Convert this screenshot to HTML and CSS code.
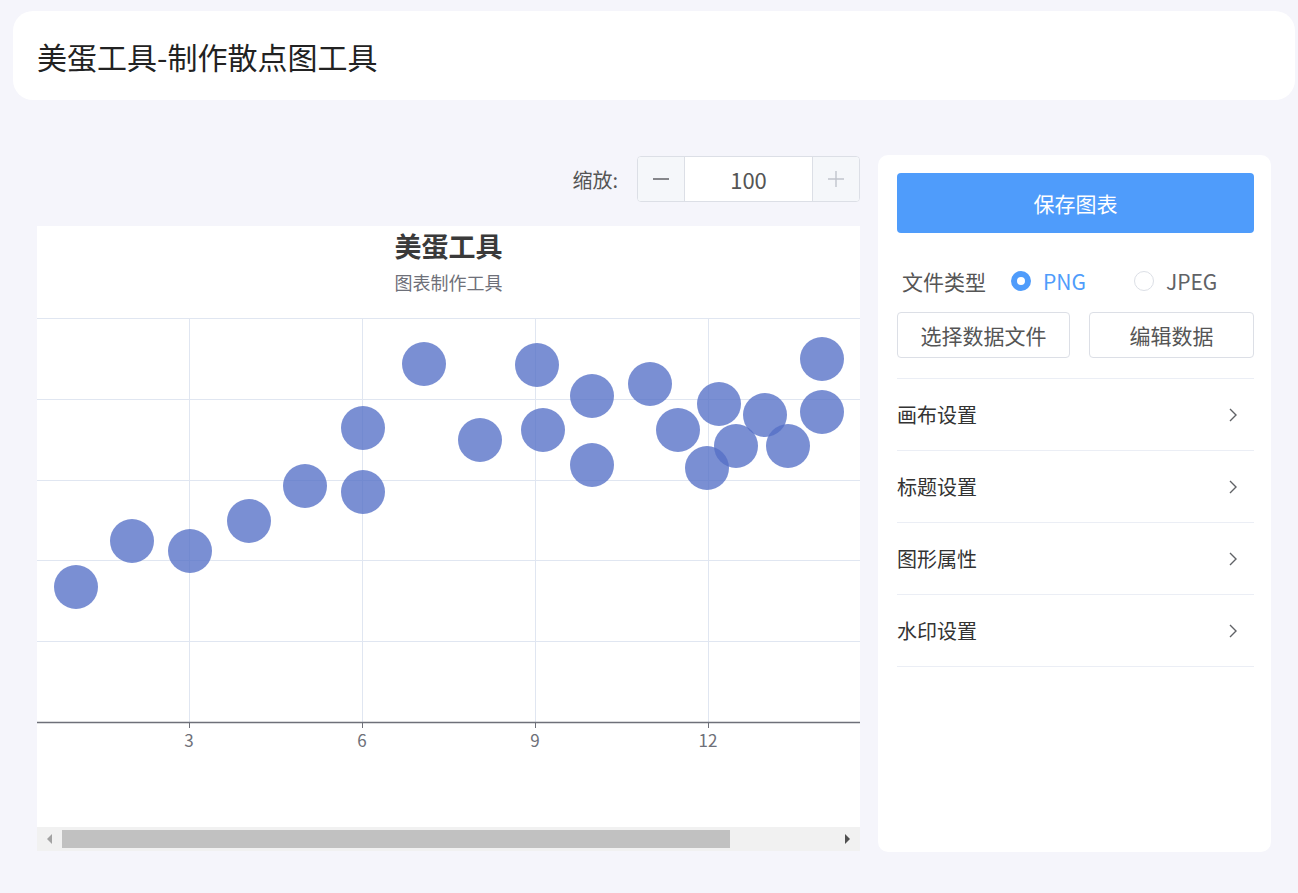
FILE: index.html
```html
<!DOCTYPE html>
<html lang="zh-CN">
<head>
<meta charset="utf-8">
<title>美蛋工具-制作散点图工具</title>
<link rel="stylesheet" href="styles.css">
</head>
<body>
<header class="header">
  <h1 class="page-title">美蛋工具-制作散点图工具</h1>
</header>
<main class="main">
  <section class="workspace">
    <div class="toolbar">
      <span class="zoom-label">缩放:</span>
      <div class="stepper">
        <button class="step-btn minus" type="button">
          <svg width="18" height="18" viewBox="0 0 18 18"><line x1="1" y1="9" x2="17" y2="9" stroke="#606266" stroke-width="1.6"/></svg>
        </button>
        <div class="step-value">100</div>
        <button class="step-btn plus" type="button">
          <svg width="18" height="18" viewBox="0 0 18 18"><line x1="1" y1="9" x2="17" y2="9" stroke="#c0c4cc" stroke-width="1.4"/><line x1="9" y1="1" x2="9" y2="17" stroke="#c0c4cc" stroke-width="1.4"/></svg>
        </button>
      </div>
    </div>
    <div class="chart-card">
      <div class="chart-head">
        <div class="c-title">美蛋工具</div>
        <div class="c-sub">图表制作工具</div>
      </div>
      <svg class="chart" width="823" height="509" viewBox="0 92 823 509">
        <g stroke="#e0e6f1" stroke-width="1">
          <line x1="0" y1="92.5" x2="823" y2="92.5"/>
          <line x1="0" y1="173.5" x2="823" y2="173.5"/>
          <line x1="0" y1="254.5" x2="823" y2="254.5"/>
          <line x1="0" y1="334.5" x2="823" y2="334.5"/>
          <line x1="0" y1="415.5" x2="823" y2="415.5"/>
          <line x1="152.5" y1="92" x2="152.5" y2="496"/>
          <line x1="325.5" y1="92" x2="325.5" y2="496"/>
          <line x1="498.5" y1="92" x2="498.5" y2="496"/>
          <line x1="671.5" y1="92" x2="671.5" y2="496"/>
        </g>
        <line x1="0" y1="496.5" x2="823" y2="496.5" stroke="#6e7079" stroke-width="1.3"/>
        <g stroke="#6e7079" stroke-width="1">
          <line x1="152.5" y1="496" x2="152.5" y2="502"/>
          <line x1="325.5" y1="496" x2="325.5" y2="502"/>
          <line x1="498.5" y1="496" x2="498.5" y2="502"/>
          <line x1="671.5" y1="496" x2="671.5" y2="502"/>
        </g>
        <g class="c-axis" text-anchor="middle">
          <text x="152" y="521">3</text>
          <text x="325" y="521">6</text>
          <text x="498" y="521">9</text>
          <text x="671" y="521">12</text>
        </g>
        <g fill="#5470c6" fill-opacity="0.78">
          <circle cx="39" cy="361" r="22"/>
          <circle cx="95" cy="315" r="22"/>
          <circle cx="153" cy="325" r="22"/>
          <circle cx="212" cy="295" r="22"/>
          <circle cx="268" cy="260" r="22"/>
          <circle cx="326" cy="202" r="22"/>
          <circle cx="326" cy="266" r="22"/>
          <circle cx="387" cy="138" r="22"/>
          <circle cx="443" cy="214" r="22"/>
          <circle cx="500" cy="139" r="22"/>
          <circle cx="506" cy="204" r="22"/>
          <circle cx="555" cy="170" r="22"/>
          <circle cx="555" cy="239" r="22"/>
          <circle cx="613" cy="158" r="22"/>
          <circle cx="641" cy="204" r="22"/>
          <circle cx="682" cy="178" r="22"/>
          <circle cx="670" cy="242" r="22"/>
          <circle cx="699" cy="220" r="22"/>
          <circle cx="728" cy="189" r="22"/>
          <circle cx="751" cy="220" r="22"/>
          <circle cx="785" cy="133" r="22"/>
          <circle cx="785" cy="186" r="22"/>
        </g>
      </svg>
    </div>
    <div class="scrollbar">
      <span class="sb-btn"><span class="tri-left"></span></span>
      <span class="sb-thumb"></span>
      <span class="sb-space"></span>
      <span class="sb-btn"><span class="tri-right"></span></span>
    </div>
  </section>
  <aside class="panel">
    <button class="save-btn" type="button">保存图表</button>
    <div class="type-row">
      <span class="type-label">文件类型</span>
      <label class="radio checked"><span class="radio-dot"></span><span class="radio-text">PNG</span></label>
      <label class="radio"><span class="radio-dot"></span><span class="radio-text">JPEG</span></label>
    </div>
    <div class="btn-row">
      <button class="plain-btn" type="button">选择数据文件</button>
      <button class="plain-btn" type="button">编辑数据</button>
    </div>
    <ul class="menu">
      <li class="menu-item"><span>画布设置</span><svg width="10" height="16" viewBox="0 0 10 16"><polyline points="2,2 8,8 2,14" fill="none" stroke="#606266" stroke-width="1.4"/></svg></li>
      <li class="menu-item"><span>标题设置</span><svg width="10" height="16" viewBox="0 0 10 16"><polyline points="2,2 8,8 2,14" fill="none" stroke="#606266" stroke-width="1.4"/></svg></li>
      <li class="menu-item"><span>图形属性</span><svg width="10" height="16" viewBox="0 0 10 16"><polyline points="2,2 8,8 2,14" fill="none" stroke="#606266" stroke-width="1.4"/></svg></li>
      <li class="menu-item"><span>水印设置</span><svg width="10" height="16" viewBox="0 0 10 16"><polyline points="2,2 8,8 2,14" fill="none" stroke="#606266" stroke-width="1.4"/></svg></li>
    </ul>
  </aside>
</main>
</body>
</html>
```

FILE: styles.css
```css
* { box-sizing: border-box; }
html, body { margin: 0; padding: 0; }
body {
  background: #f5f5fb;
  font-family: "Noto Sans CJK SC", "Noto Sans", sans-serif;
  color: #333;
  width: 1298px;
  height: 893px;
  overflow: hidden;
}
button { font-family: inherit; }

.header {
  margin: 11px 3px 0 13px;
  height: 89px;
  background: #fff;
  border-radius: 20px;
  display: flex;
  align-items: center;
  padding-left: 24px;
}
.page-title {
  margin: 0;
  font-size: 30px;
  font-weight: 400;
  color: #222;
  line-height: 1;
}

.main {
  display: flex;
  align-items: flex-start;
  margin: 55px 0 0 37px;
}
.workspace {
  width: 823px;
  display: flex;
  flex-direction: column;
}
.toolbar {
  margin-top: 1px;
  height: 46px;
  display: flex;
  justify-content: flex-end;
  align-items: center;
}
.zoom-label {
  font-size: 20px;
  color: #555;
  margin-right: 19px;
}
.stepper {
  display: flex;
  width: 223px;
  height: 46px;
  border: 1px solid #dcdfe6;
  border-radius: 4px;
  overflow: hidden;
  background: #fff;
}
.step-btn {
  width: 47px;
  border: 0;
  background: #f5f7fa;
  padding: 0;
  display: flex;
  align-items: center;
  justify-content: center;
}
.step-btn.minus { border-right: 1px solid #dcdfe6; }
.step-btn.plus { border-left: 1px solid #dcdfe6; }
.step-value {
  flex: 1;
  display: flex;
  align-items: center;
  justify-content: center;
  font-size: 22px;
  color: #555;
}

.chart-card {
  margin-top: 24px;
  height: 601px;
  background: #fff;
}
.chart-head {
  height: 92px;
  display: flex;
  flex-direction: column;
  align-items: center;
  padding-top: 3px;
}
.c-title {
  font-size: 27px;
  font-weight: 700;
  color: #3a3a3a;
  line-height: 34px;
}
.c-sub {
  font-size: 18px;
  color: #6e7079;
  line-height: 24px;
  margin-top: 7px;
}
.chart { display: block; }
.c-axis text { font-size: 17px; fill: #6e7079; }

.scrollbar {
  height: 24px;
  background: #f1f1f1;
  display: flex;
  align-items: center;
}
.sb-btn {
  width: 25px;
  height: 24px;
  display: flex;
  align-items: center;
  justify-content: center;
}
.sb-thumb {
  width: 668px;
  height: 18px;
  background: #c1c1c1;
}
.sb-space { flex: 1; }
.tri-left {
  width: 0; height: 0;
  border-top: 5px solid transparent;
  border-bottom: 5px solid transparent;
  border-right: 5px solid #a3a3a3;
}
.tri-right {
  width: 0; height: 0;
  border-top: 5px solid transparent;
  border-bottom: 5px solid transparent;
  border-left: 5px solid #505050;
}

.panel {
  margin-left: 18px;
  width: 393px;
  height: 697px;
  background: #fff;
  border-radius: 10px;
  padding: 18px 17px 0 19px;
}
.save-btn {
  display: block;
  width: 100%;
  height: 60px;
  border: 0;
  border-radius: 4px;
  background: #4f9cfb;
  color: #fff;
  font-size: 21px;
}
.type-row {
  margin-top: 25px;
  height: 46px;
  display: flex;
  align-items: center;
  padding-left: 5px;
}
.type-label {
  font-size: 21px;
  color: #555;
  margin-right: 25px;
}
.radio {
  display: flex;
  align-items: center;
  font-size: 21px;
  color: #606266;
}
.radio + .radio { margin-left: 48px; }
.radio-dot {
  width: 20px;
  height: 20px;
  border-radius: 50%;
  border: 1px solid #dcdfe6;
  background: #fff;
  margin-right: 12px;
}
.radio.checked .radio-dot {
  border: 6px solid #4f9cfb;
}
.radio.checked .radio-text { color: #4f9cfb; }

.btn-row {
  margin-top: 8px;
  display: grid;
  grid-template-columns: 173px 1fr;
  column-gap: 19px;
}
.plain-btn {
  height: 46px;
  border: 1px solid #dcdfe6;
  border-radius: 4px;
  background: #fff;
  font-size: 21px;
  color: #555;
  padding: 0;
}

.menu {
  list-style: none;
  margin: 20px 0 0;
  padding: 0;
  border-top: 1px solid #ebeef5;
}
.menu-item {
  height: 72px;
  border-bottom: 1px solid #ebeef5;
  display: flex;
  align-items: center;
  justify-content: space-between;
  font-size: 20px;
  color: #333;
  padding-right: 16px;
}
```
